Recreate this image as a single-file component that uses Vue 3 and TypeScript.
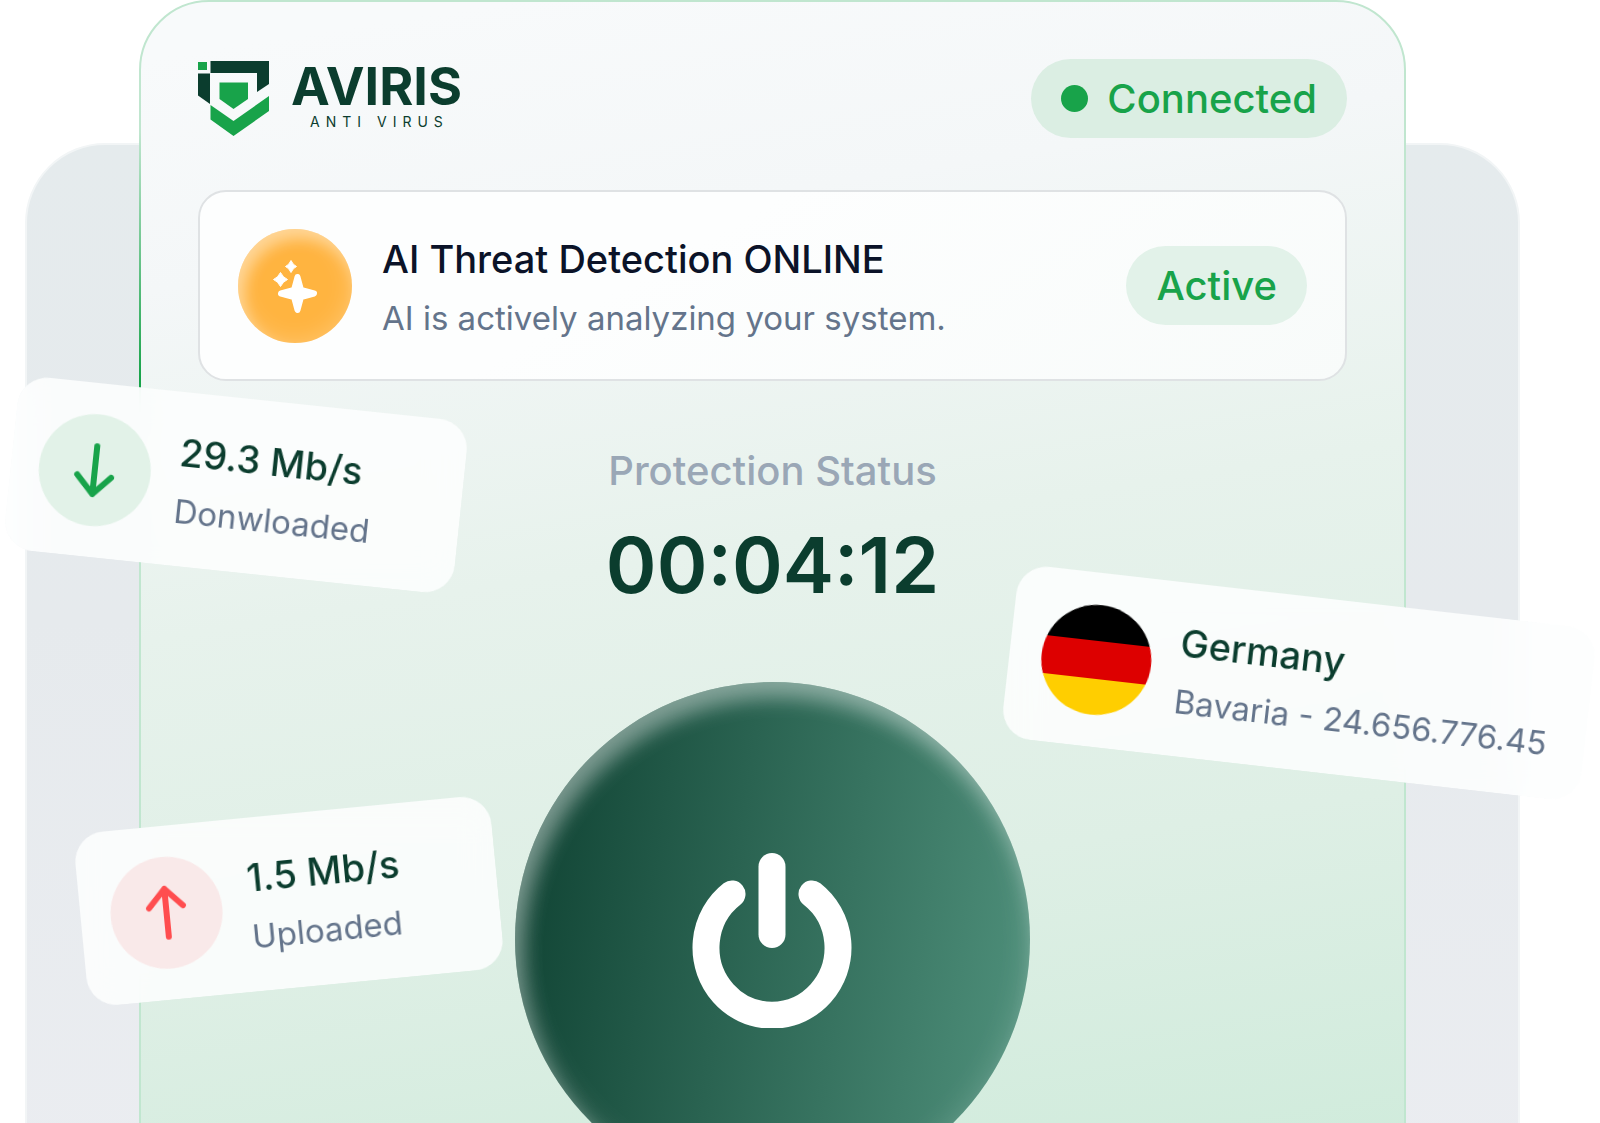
<script setup lang="ts">
interface Speed {
  kind: 'down' | 'up'
  value: string
  label: string
}

const speeds: Speed[] = [
  { kind: 'down', value: '29.3 Mb/s', label: 'Donwloaded' },
  { kind: 'up', value: '1.5 Mb/s', label: 'Uploaded' },
]

const arrows: Record<Speed['kind'], string> = {
  down: 'M28 4V52M11 34L28 52L45 34',
  up: 'M28 52V4M11 22L28 4L45 22',
}
</script>

<template>
  <main class="stage">
    <div class="backdrop"></div>

    <section class="panel">
      <header class="top">
        <div class="brand">
          <svg class="mark" viewBox="0 0 71 75" aria-hidden="true">
            <path fill="#18a34a" d="M0 1H9V9H0Z" />
            <path fill="#0b3d2e" d="M12.500 0H71V23L59 31V12H12.500Z" />
            <path fill="#0b3d2e" d="M0 12.500H12V43L0 34.500Z" />
            <path fill="#18a34a" d="M21.500 21.500H50V38L35.500 48L21.500 38Z" />
            <path fill="#18a34a" d="M12.500 44L35.500 60L71 35V50L35.500 75L12.500 58.500Z" />
          </svg>
          <div class="words">
            <span class="name">AVIRIS</span>
            <span class="tag">ANTI VIRUS</span>
          </div>
        </div>
        <span class="pill pill-strong"><i class="dot"></i>Connected</span>
      </header>

      <article class="alert">
        <span class="spark">
          <svg viewBox="0 0 114 114" aria-hidden="true">
            <g fill="#fff" stroke="#fff" stroke-linejoin="round">
              <path stroke-width="6" d="M59.500 48L63 61L76 64.500L63 68L59.500 81L56 68L43 64.500L56 61Z" />
              <path stroke-width="1" d="M42.500 43.500Q45 48.500 49.500 50.500Q45 52.500 42.500 57.500Q40 52.500 35.500 50.500Q40 48.500 42.500 43.500Z" />
              <path stroke-width="1" d="M53 31.500Q55 36 58.500 37.500Q55 39 53 43.500Q51 39 47.500 37.500Q51 36 53 31.500Z" />
            </g>
          </svg>
        </span>
        <div class="lines">
          <h2 class="title">AI Threat Detection ONLINE</h2>
          <p class="sub">AI is actively analyzing your system.</p>
        </div>
        <span class="pill">Active</span>
      </article>

      <div class="status">
        <p class="status-label">Protection Status</p>
        <p class="timer">00:04:12</p>
      </div>

      <button class="power" type="button" aria-label="Toggle protection">
        <svg viewBox="0 0 164 176" aria-hidden="true">
          <g fill="none" stroke="#fff" stroke-width="27" stroke-linecap="round">
            <path d="M81 14.500V82.500" />
            <path d="M41 42A66 67.500 0 1 0 121 42" />
          </g>
        </svg>
      </button>
    </section>

    <aside v-for="s in speeds" :key="s.kind" class="float" :class="s.kind">
      <span class="badge">
        <svg viewBox="0 0 56 56" aria-hidden="true">
          <path :d="arrows[s.kind]" />
        </svg>
      </span>
      <div class="lines">
        <h3 class="title">{{ s.value }}</h3>
        <p class="sub">{{ s.label }}</p>
      </div>
    </aside>

    <aside class="float place">
      <span class="flag"></span>
      <div class="lines">
        <h3 class="title">Germany</h3>
        <p class="sub">Bavaria - 24.656.776.45</p>
      </div>
    </aside>
  </main>
</template>

<style>
body {
  margin: 0;
  background: #fff;
}
</style>

<style scoped>
.stage {
  position: relative;
  box-sizing: border-box;
  height: 100vh;
  padding: 0 194px 0 139px;
  overflow: hidden;
  font-family: Inter, "Liberation Sans", sans-serif;
  color: #0b3d2e;
}

h2,
h3,
p {
  margin: 0;
}

svg {
  display: block;
}

.backdrop {
  position: absolute;
  top: 143px;
  right: 80px;
  bottom: -80px;
  left: 25px;
  border: 2px solid #f2f5f6;
  border-radius: 80px;
  background: linear-gradient(180deg, #e5ebed 0%, #e6eaed 45%, #ebedf1 100%);
}

.panel {
  position: relative;
  box-sizing: border-box;
  display: flex;
  flex-direction: column;
  align-items: center;
  min-height: calc(100vh + 80px);
  padding: 57px;
  border: 2px solid #c0e6cf;
  border-radius: 70px;
  background: linear-gradient(171deg, #f8fafb 4%, #f4f7f8 20%, #e7f2ec 44%, #deefe5 68%, #cfebdb 94%);
}

.panel::before {
  content: "";
  position: absolute;
  top: 130px;
  left: -2px;
  width: 2px;
  height: 290px;
  background: linear-gradient(180deg, transparent, #18a34a 85%);
}

.top {
  display: flex;
  align-items: center;
  justify-content: space-between;
  align-self: stretch;
}

.brand {
  display: flex;
  align-items: center;
  gap: 22px;
}

.mark {
  width: 71px;
  height: 75px;
}

.words {
  display: flex;
  flex-direction: column;
  align-items: center;
  padding-bottom: 4px;
}

.name {
  font-size: 52px;
  font-weight: 700;
  line-height: 50px;
}

.tag {
  padding-left: 6px;
  font-size: 14px;
  font-weight: 400;
  line-height: 20px;
  letter-spacing: 6px;
}

.pill {
  display: flex;
  align-items: center;
  gap: 19px;
  height: 79px;
  padding: 0 30px;
  border-radius: 40px;
  background: #e2f2e9;
  color: #18a34a;
  font-size: 40px;
  font-weight: 500;
}

.pill-strong {
  background: #dbeee3;
}

.dot {
  width: 27px;
  height: 27px;
  border-radius: 50%;
  background: #18a34a;
}

.alert {
  box-sizing: border-box;
  display: flex;
  align-items: center;
  align-self: stretch;
  gap: 30px;
  height: 191px;
  margin-top: 52px;
  padding: 0 38px;
  border: 2px solid #dfe2e4;
  border-radius: 28px;
  background: linear-gradient(150deg, #fdfefe 40%, #f8fbfa 100%);
}

.alert .lines {
  flex: 1;
}

.alert .title {
  color: #0b1328;
}

.spark {
  width: 114px;
  height: 114px;
  border-radius: 50%;
  background: #ffb440;
  box-shadow: inset 6px 10px 14px rgba(255, 255, 255, 0.36), inset 0 0 24px rgba(255, 255, 255, 0.25);
}

.lines {
  display: flex;
  flex-direction: column;
  gap: 8px;
  white-space: nowrap;
}

.title {
  font-size: 38px;
  font-weight: 500;
  line-height: 56px;
}

.sub {
  color: #64748b;
  font-size: 33px;
  font-weight: 400;
  line-height: 46px;
}

.status {
  display: flex;
  flex-direction: column;
  align-items: center;
  gap: 18px;
  margin-top: 62px;
}

.status-label {
  color: #9aa7b6;
  font-size: 40px;
  font-weight: 500;
  line-height: 56px;
}

.timer {
  font-size: 77px;
  font-weight: 600;
  line-height: 96px;
}

.power {
  display: flex;
  flex: none;
  align-items: center;
  justify-content: center;
  width: 515px;
  height: 515px;
  margin-top: 69px;
  padding: 0;
  border: 0;
  border-radius: 50%;
  background: linear-gradient(98deg, #134737 8%, #4e8f7a 96%);
  box-shadow: inset 8px 16px 20px rgba(255, 255, 255, 0.38), inset 0 0 32px rgba(255, 255, 255, 0.16);
}

.power svg {
  width: 164px;
  height: 176px;
}

.float {
  position: absolute;
  box-sizing: border-box;
  display: flex;
  align-items: center;
  gap: 27px;
  height: 174px;
  padding: 0 28px;
  border-radius: 30px;
  background: rgba(253, 254, 254, 0.87);
  backdrop-filter: blur(20px);
}

.down {
  top: 398px;
  left: 10px;
  width: 452px;
  transform: rotate(6deg);
}

.up {
  top: 814px;
  left: 80px;
  width: 418px;
  padding: 0 30px;
  transform: rotate(-5.5deg);
}

.place {
  top: 596px;
  right: 10px;
  width: 582px;
  padding: 0 32px;
  transform: rotate(6.5deg);
}

.badge {
  display: flex;
  flex: none;
  align-items: center;
  justify-content: center;
  width: 112px;
  height: 112px;
  border-radius: 50%;
}

.badge svg {
  width: 56px;
  height: 56px;
  fill: none;
  stroke-width: 6px;
  stroke-linecap: round;
  stroke-linejoin: round;
}

.down .badge {
  background: #e2f2e8;
  stroke: #18a34a;
}

.up .badge {
  background: #f9e9e9;
  stroke: #ff4d4f;
}

.flag {
  flex: none;
  width: 110px;
  height: 110px;
  border-radius: 50%;
  background: linear-gradient(180deg, #000 33%, #d00 33%, #d00 67%, #ffce00 67%);
}
</style>
